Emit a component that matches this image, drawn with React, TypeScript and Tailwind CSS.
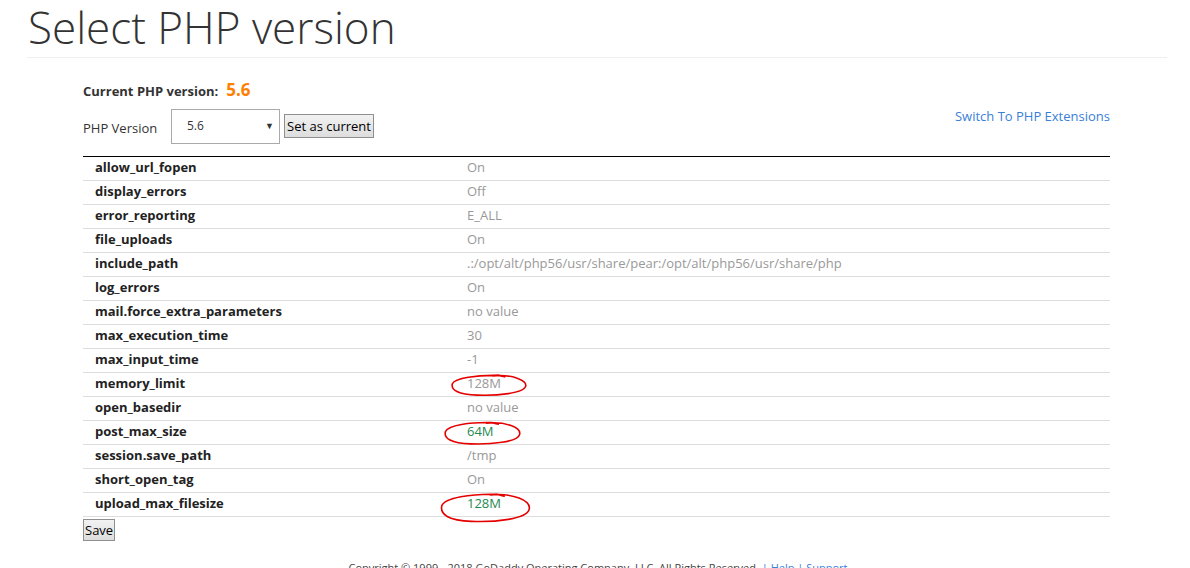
const rows: { name: string; value: string; green?: boolean }[] = [
  { name: 'allow_url_fopen', value: 'On' },
  { name: 'display_errors', value: 'Off' },
  { name: 'error_reporting', value: 'E_ALL' },
  { name: 'file_uploads', value: 'On' },
  { name: 'include_path', value: '.:/opt/alt/php56/usr/share/pear:/opt/alt/php56/usr/share/php' },
  { name: 'log_errors', value: 'On' },
  { name: 'mail.force_extra_parameters', value: 'no value' },
  { name: 'max_execution_time', value: '30' },
  { name: 'max_input_time', value: '-1' },
  { name: 'memory_limit', value: '128M' },
  { name: 'open_basedir', value: 'no value' },
  { name: 'post_max_size', value: '64M', green: true },
  { name: 'session.save_path', value: '/tmp' },
  { name: 'short_open_tag', value: 'On' },
  { name: 'upload_max_filesize', value: '128M', green: true },
];

const font = { fontFamily: '"Open Sans", "Noto Sans", sans-serif' };

const Scribble = ({ className, w, h }: { className: string; w: number; h: number }) => (
  <svg
    className={`absolute pointer-events-none ${className}`}
    width={w}
    height={h}
    viewBox={`0 0 ${w} ${h}`}
    fill="none"
  >
    <path
      d={`M${w * 0.55} ${h * 0.12} C${w * 0.8} ${h * 0.05}, ${w * 0.99} ${h * 0.3}, ${w * 0.97} ${h * 0.55} C${w * 0.95} ${h * 0.85}, ${w * 0.6} ${h * 0.95}, ${w * 0.35} ${h * 0.92} C${w * 0.1} ${h * 0.9}, ${w * 0.01} ${h * 0.7}, ${w * 0.03} ${h * 0.45} C${w * 0.06} ${h * 0.2}, ${w * 0.35} ${h * 0.08}, ${w * 0.62} ${h * 0.1} L${w * 0.7} ${h * 0.16}`}
      stroke="#e50000"
      strokeWidth="1.6"
      strokeLinecap="round"
    />
  </svg>
);

export default function App() {
  return (
    <div className="w-[1190px] h-[568px] overflow-hidden bg-white text-[#333]" style={font}>
      <div className="px-[27px]">
        <h1 className="text-[44px] font-light leading-none pt-[5px] pb-[8px] pl-[1px] text-[#333]">
          Select PHP version
        </h1>
        <div className="border-t border-[#eeeeee] w-[1140px]" />
      </div>

      <div className="ml-[83px] w-[1027px] mt-[19px]">
        <div className="flex items-baseline gap-[8px]">
          <span className="text-[13px] font-bold">Current PHP version:</span>
          <span className="text-[17px] font-bold text-[#ff7f00]">5.6</span>
        </div>

        <div className="flex items-center justify-between mt-[6px]">
          <div className="flex items-center">
            <span className="text-[13px] w-[88px] pt-[6px]">PHP Version</span>
            <div className="relative w-[109px] h-[35px] border border-[#aaaaaa] flex items-center pl-[15px] text-[12px]">
              5.6
              <span className="absolute right-[5px] top-[9px] text-[9px]">▼</span>
            </div>
            <button className="ml-[4px] h-[24px] px-[2px] mt-[0px] text-[13px] text-black border border-[#8f8f8f] bg-gradient-to-b from-[#f2f2f2] to-[#dddddd] leading-none">
              Set as current
            </button>
          </div>
          <a className="text-[13px] text-[#3a7fd9] -mt-[18px]">Switch To PHP Extensions</a>
        </div>

        <div className="relative mt-[12px] border-t border-black">
          {rows.map((r) => (
            <div key={r.name} className="grid grid-cols-[384px_1fr] h-[24px] items-center border-b border-[#dddddd] text-[13px]">
              <span className="pl-[12px] font-bold text-[#222]">{r.name}</span>
              <span className={r.green ? 'text-[#1f8a50]' : 'text-[#999999]'}>{r.value}</span>
            </div>
          ))}
          <Scribble className="left-[367px] top-[216px]" w={78} h={24} />
          <Scribble className="left-[360px] top-[263px]" w={79} h={26} />
          <Scribble className="left-[356px] top-[334px]" w={93} h={33} />
        </div>

        <button className="mt-[2px] h-[22px] px-[1px] text-[13px] text-black border border-[#8f8f8f] bg-gradient-to-b from-[#f2f2f2] to-[#dddddd] leading-none">
          Save
        </button>
      </div>

      <div className="text-center text-[11px] text-[#444] mt-[19px] pl-[6px]">
        Copyright © 1999 - 2018 GoDaddy Operating Company, LLC. All Rights Reserved.{' '}
        <span className="text-[#3a7fd9]">| Help | Support</span>
      </div>
    </div>
  );
}
